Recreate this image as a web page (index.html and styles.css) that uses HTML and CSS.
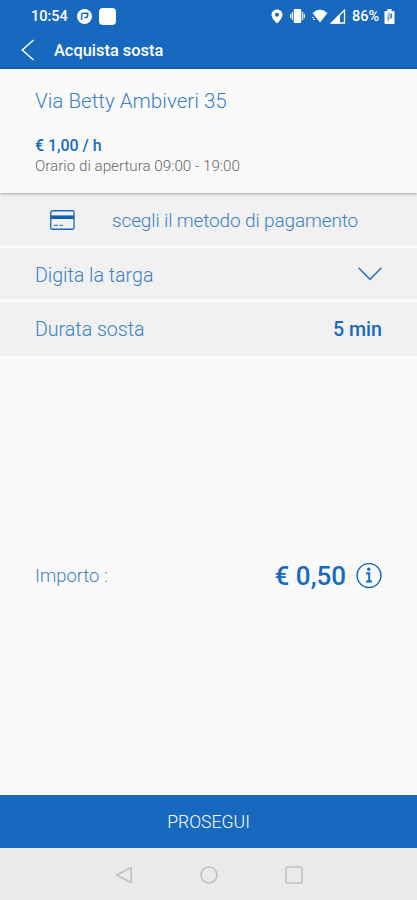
FILE: index.html
```html
<!DOCTYPE html>
<html lang="it">
<head>
    <meta charset="UTF-8">
    <meta name="viewport" content="width=device-width, initial-scale=1">
    <title>Acquista sosta</title>
    <link rel="stylesheet" href="styles.css">
</head>
<body>
<div class="app">
    <header class="header">
        <div class="status">
            <span class="clock">10:54</span>
            <svg class="notif" width="15" height="15" viewBox="0 0 15 15">
                <circle cx="7.5" cy="7.5" r="7.5" fill="#fff"/>
                <path d="M4.6 11V5.9Q4.6 4.2 6.3 4.2H11.5M7.4 8.4H9Q10.6 8.4 10.6 6.5V4.4" fill="none" stroke="#1769c0" stroke-width="1.5"/>
            </svg>
            <span class="square"></span>
            <svg class="pin" width="12" height="15" viewBox="0 0 12 15">
                <path d="M6 0.5C2.8 0.5 0.5 2.8 0.5 5.8C0.5 9.5 6 14.5 6 14.5S11.5 9.5 11.5 5.8C11.5 2.8 9.2 0.5 6 0.5Z" fill="#fff"/>
                <circle cx="6" cy="5.8" r="2" fill="#1769c0"/>
            </svg>
            <svg class="vibrate" width="15" height="14" viewBox="0 0 15 14">
                <rect x="3.7" y="0" width="7.6" height="14" rx="1" fill="#fff"/>
                <path d="M2.3 3V11M12.7 3V11M0.6 5V9M14.4 5V9" stroke="#fff" stroke-width="1.1"/>
            </svg>
            <svg class="wifi" width="16" height="14" viewBox="0 0 16 14">
                <path d="M0.5 4Q8 -3 15.5 4L8 13.5Z" fill="#fff"/>
                <path d="M0 8.5H2M1 10.5H3" stroke="#fff" stroke-width="1"/>
            </svg>
            <svg class="signal" width="16" height="15" viewBox="0 0 16 15">
                <path d="M1.5 14L14.5 1.2V14Z" fill="none" stroke="#fff" stroke-width="1.3"/>
                <path d="M0.5 14.5L10 5V14.5Z" fill="#fff"/>
            </svg>
            <span class="percent">86%</span>
            <svg class="battery" width="11" height="15" viewBox="0 0 11 15">
                <path d="M1.5 2H3.5V0H7.5V2H9.5Q10.5 2 10.5 3V14Q10.5 15 9.5 15H1.5Q0.5 15 0.5 14V3Q0.5 2 1.5 2Z" fill="#fff"/>
                <path d="M3.5 5H7.5V9H3.5M3.5 7H7M4.2 9V12" fill="none" stroke="#1769c0" stroke-width="0.9"/>
            </svg>
        </div>
        <div class="toolbar">
            <svg class="back" width="14" height="22" viewBox="0 0 14 22">
                <path d="M12.5 1L1.3 11L12.5 21" fill="none" stroke="#fff" stroke-width="1.5"/>
            </svg>
            <h1 class="title">Acquista sosta</h1>
        </div>
    </header>

    <section class="place">
        <h2 class="address">Via Betty Ambiveri 35</h2>
        <p class="price">€ 1,00 / h</p>
        <p class="hours">Orario di apertura 09:00 - 19:00</p>
    </section>

    <div class="rows">
        <div class="row payment">
            <svg class="card" width="25" height="20" viewBox="0 0 25 20">
                <rect x="0.75" y="0.75" width="23.3" height="18.5" rx="1.8" fill="none" stroke="#1769c0" stroke-width="1.3"/>
                <rect x="1" y="5.4" width="23" height="3.6" fill="#0f5fb8"/>
                <path d="M4 15.2H8M9.5 15.2H13" stroke="#1769c0" stroke-width="1.1"/>
            </svg>
            <span class="pay-label">scegli il metodo di pagamento</span>
        </div>
        <div class="row plate">
            <span class="plate-label">Digita la targa</span>
            <svg width="24" height="14" viewBox="0 0 24 14">
                <path d="M0.6 0.8L12 12.4L23.4 0.8" fill="none" stroke="#2a74c0" stroke-width="1.5"/>
            </svg>
        </div>
        <div class="row duration">
            <span class="duration-label">Durata sosta</span>
            <span class="minutes">5 min</span>
        </div>
    </div>

    <main class="total">
        <span class="total-label">Importo :</span>
        <span class="amount">€ 0,50</span>
        <svg class="info" width="26" height="26" viewBox="0 0 26 26">
            <circle cx="13" cy="12.5" r="11.9" fill="none" stroke="#1769c0" stroke-width="1.5"/>
            <circle cx="12.8" cy="6.3" r="1.7" fill="#1769c0"/>
            <path d="M10.2 10.3H13.2V18.1M10 18.4H16" fill="none" stroke="#1769c0" stroke-width="2"/>
        </svg>
    </main>

    <button class="proceed">PROSEGUI</button>

    <nav class="navbar">
        <svg width="18" height="18" viewBox="0 0 18 18">
            <path d="M1.6 9L16.2 1.5V16.5Z" fill="none" stroke="#c0c0c0" stroke-width="1.6" stroke-linejoin="round"/>
        </svg>
        <svg width="18" height="18" viewBox="0 0 18 18">
            <circle cx="9" cy="9" r="8" fill="none" stroke="#c0c0c0" stroke-width="1.6"/>
        </svg>
        <svg width="18" height="18" viewBox="0 0 18 18">
            <rect x="1" y="1" width="16" height="16" rx="2" fill="none" stroke="#c0c0c0" stroke-width="1.6"/>
        </svg>
    </nav>
</div>
</body>
</html>
```

FILE: styles.css
```css
*{
    box-sizing: border-box;
}
body,h1,h2,p{
    margin: 0;
    padding: 0;
}
body{
    font-family: Roboto, "Liberation Sans", sans-serif;
    background: #fafafa;
}
svg{
    display: block;
    flex: none;
}
span,h1,h2,p{
    white-space: nowrap;
}
.app{
    display: flex;
    flex-direction: column;
    height: 900px;
    overflow: hidden;
}
.header{
    height: 69px;
    background: #1769c0;
    border-bottom: 1px solid #0e5cae;
    color: #fff;
}
.status{
    display: flex;
    align-items: center;
    height: 32px;
    padding-left: 31px;
    font-size: 14.5px;
    font-weight: 500;
}
.clock{
    width: 46px;
}
.square{
    width: 17px;
    height: 17px;
    margin-left: 7px;
    border-radius: 4px;
    background: #fff;
}
.pin{
    margin-left: 155px;
}
.vibrate{
    margin-left: 7px;
}
.wifi{
    margin-left: 7px;
}
.signal{
    margin-left: 2px;
}
.percent{
    width: 32px;
    margin-left: 6px;
}
.toolbar{
    display: flex;
    align-items: center;
    height: 36px;
    padding-left: 21px;
}
.title{
    margin-left: 19px;
    padding-top: 2px;
    font-size: 16.4px;
    line-height: 20px;
    font-weight: 500;
}
.place{
    position: relative;
    height: 124px;
    padding: 20px 35px 0;
    background: #fafafa;
    box-shadow: 0 1px 3px rgba(0, 0, 0, .3);
}
.address{
    font-size: 20.6px;
    line-height: 24px;
    font-weight: 300;
    color: #3a80c6;
}
.price{
    margin-top: 23px;
    font-size: 15.9px;
    line-height: 20px;
    font-weight: 500;
    color: #1769c0;
}
.hours{
    font-size: 15.2px;
    line-height: 20px;
    font-weight: 300;
    color: #666;
}
.rows{
    display: flex;
    flex-direction: column;
    gap: 3px;
}
.row{
    display: flex;
    align-items: center;
    justify-content: space-between;
    padding: 0 35px;
    background: #f1f1f1;
    font-size: 19.6px;
    font-weight: 300;
    color: #3a80c6;
}
.payment{
    height: 52px;
    justify-content: flex-start;
    padding: 2px 0 0 50px;
}
.pay-label{
    margin-left: 37px;
    font-size: 19px;
    letter-spacing: -.13px;
}
.plate{
    height: 51px;
    padding-top: 1px;
}
.plate-label{
    padding-top: 2px;
}
.duration{
    height: 54px;
}
.minutes{
    font-weight: 500;
    color: #1769c0;
}
.total{
    display: flex;
    flex: 1;
    align-items: center;
    padding: 0 35px;
}
.total-label{
    flex: 1;
    font-size: 18.4px;
    font-weight: 300;
    color: #3a80c6;
}
.amount{
    font-size: 26px;
    font-weight: 500;
    color: #1769c0;
}
.info{
    margin-left: 10px;
}
.proceed{
    height: 53px;
    padding: 1px 0 0;
    border: 0;
    background: #1769c0;
    font-family: inherit;
    font-size: 17.6px;
    font-weight: 300;
    color: #fff;
}
.navbar{
    display: flex;
    justify-content: center;
    align-items: center;
    gap: 67px;
    height: 52px;
    padding-top: 1px;
    background: #eaeaea;
}
```
